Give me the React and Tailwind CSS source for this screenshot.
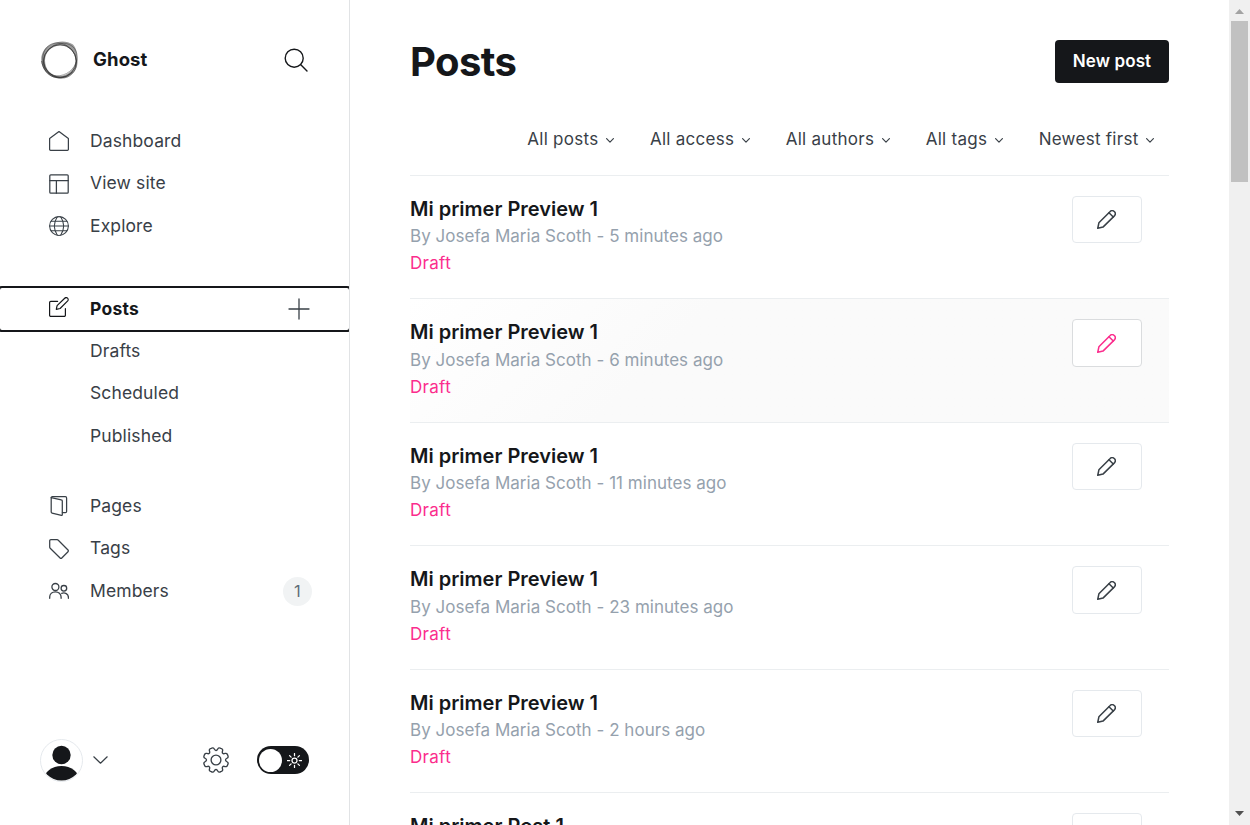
import React from 'react';

const stroke = { fill: 'none', stroke: 'currentColor', strokeLinecap: 'round', strokeLinejoin: 'round' };

const HomeIcon = () => (
  <svg className="size-5 shrink-0" viewBox="0 0 20 20" {...stroke} strokeWidth="1.25">
    <path d="M.6 7.6 10 .6l9.400 7V18.200a1.200 1.200 0 0 1-1.200 1.200H1.800A1.200 1.200 0 0 1 .6 18.200z" />
  </svg>
);

const SiteIcon = () => (
  <svg className="size-5 shrink-0" viewBox="0 0 20 20" {...stroke} strokeWidth="1.25">
    <rect x=".8" y=".8" width="18.400" height="18.400" rx="1" />
    <path d="M.8 6.500h18.400M7.400 6.500v12.700" />
  </svg>
);

const GlobeIcon = () => (
  <svg className="size-5 shrink-0" viewBox="0 0 20 20" {...stroke} strokeWidth="1.05">
    <circle cx="10" cy="10" r="9.400" />
    <path d="M.6 10h18.800M2 5.300h16M2 14.700h16M8.300.8C4.600 6.500 4.600 13.500 8.300 19.200M11.700.8c3.700 5.700 3.700 12.700 0 18.400" />
  </svg>
);

const PostsIcon = () => (
  <svg className="size-5 shrink-0" viewBox="0 0 20 20" {...stroke} strokeWidth="1.2">
    <path d="M16.400 11.700v6.500a1.200 1.200 0 0 1-1.200 1.200H1.800A1.200 1.200 0 0 1 .6 18.200V5.600a1.200 1.200 0 0 1 1.200-1.200H8.600" />
    <path d="m11.100 11.500-3.800.8.800-3.700L15.700 1.300a1.900 1.900 0 0 1 3 2.600z" />
  </svg>
);

const PagesIcon = () => (
  <svg className="size-5 shrink-0" viewBox="0 0 20 20" {...stroke} strokeWidth="1.250">
    <path d="M2.200 1.600 12.300 3.800a1.200 1.200 0 0 1 1 1.200v13.700c0 .5-.4.8-.9.7L3.100 17.200a1.200 1.200 0 0 1-.9-1.200z" />
    <path d="M2.200 1.600C2.200 1 2.700.7 3.200.7h13.200a1.200 1.200 0 0 1 1.200 1.200v13.500a1.200 1.200 0 0 1-1.200 1.200h-3" />
  </svg>
);

const TagIcon = () => (
  <svg className="size-5 shrink-0" viewBox="0 0 20 20" {...stroke} strokeWidth="1.25">
    <path d="M.7 1.900A1.200 1.200 0 0 1 1.900.7h6.200c.5 0 .9.2 1.200.5l9.700 9.800a1.200 1.200 0 0 1 0 1.700l-6.200 6.300a1.200 1.200 0 0 1-1.700 0L1.200 9.200A1.700 1.700 0 0 1 .7 8z" />
  </svg>
);

const MembersIcon = () => (
  <svg className="size-5 shrink-0" viewBox="0 0 20 20" {...stroke} strokeWidth="1.3">
    <circle cx="6.400" cy="6" r="3.500" />
    <circle cx="14.900" cy="7.300" r="2.800" />
    <path d="M.7 17.300v-1.200c0-3.100 2.500-5.200 5.700-5.200s5.700 2.100 5.700 5.200v1.200M12.700 12.300c3.300-1.200 6.700.8 6.700 3.900v1.100" />
  </svg>
);

const PencilIcon = () => (
  <svg className="mr-0.5 size-[19px]" viewBox="0 0 20 20" {...stroke} strokeWidth="1.600">
    <path d="M.8 19.200 2 13.500 13.600 1.800a3.150 3.150 0 0 1 4.700 4.400L6.300 18z" />
    <path d="m12.600 2.900 4.500 4.400" />
  </svg>
);

const Chevron = () => (
  <svg className="mt-px w-2 h-[5px] shrink-0" viewBox="0 0 8 5" {...stroke} strokeWidth="1.150">
    <path d="m.6.600 3.400 3.600L7.400.600" />
  </svg>
);

const Logo = () => (
  <svg className="size-10 shrink-0" viewBox="0 0 40 40">
    <path fill="#999" fillRule="evenodd" d="M12 4C18 .8 27 .5 33 4.500c3.500 4 4 8 4.300 13 1 6-.5 12-3.800 15-5 5-10 6.500-17 5.500C8 36.500 1.500 29.500 1.200 20 1 12 6 6 12 4zM20.500 5.500C12 5.500 5 12 5 20.500S11 36 19.500 36s16-7.500 16-15.500-6.500-15-15-15z" />
    <g fill="none" stroke="#222" strokeWidth=".9">
      <circle cx="20" cy="21" r="16.300" strokeOpacity=".7" />
      <ellipse cx="20.200" cy="19.500" rx="18" ry="15.200" transform="rotate(-38 20.200 19.500)" strokeOpacity=".4" />
      <ellipse cx="19.600" cy="20.500" rx="18.400" ry="16" transform="rotate(55 19.600 20.500)" strokeOpacity=".45" />
      <path d="M1.700 21c1 8 6.500 15 14 16.500 6 1 12-.5 17-5.500" strokeOpacity=".7" />
    </g>
  </svg>
);

const GearIcon = () => (
  <svg className="mb-px size-[26px] shrink-0" viewBox="-13 -13 26 26" {...stroke} strokeWidth="1.350">
    <circle r="4.900" />
    <path d={gearPath()} />
  </svg>
);

// Eight rounded teeth, each joined to the next by a shallow valley.
function gearPath() {
  const point = (radius, degrees) => {
    const a = (degrees * Math.PI) / 180;
    return `${(radius * Math.cos(a)).toFixed(2)} ${(radius * Math.sin(a)).toFixed(2)}`;
  };
  let d = `M${point(9.500, 0)}`;
  for (let i = 0; i < 8; i += 1) {
    const base = i * 45;
    d += `Q${point(9.500, base + 6)} ${point(11.100, base + 9)}`;
    d += `Q${point(13.200, base + 12)} ${point(12.600, base + 22.500)}`;
    d += `Q${point(13.200, base + 33)} ${point(11.100, base + 36)}`;
    d += `Q${point(9.500, base + 39)} ${point(9.500, base + 45)}`;
  }
  return `${d}Z`;
}

function NavItem({ icon, label, children }) {
  return (
    <a className="flex h-[42.5px] items-center pl-[49px] pr-[37px]">
      <span className="flex w-[41px]">{icon}</span>
      <span className="flex-1">{label}</span>
      {children}
    </a>
  );
}

function Sidebar() {
  return (
    <aside className="flex h-full w-[350px] shrink-0 flex-col overflow-hidden border-r border-[#e1e3e5] text-[17.5px] tracking-[0.12px] text-[#394047]">
      <header className="flex h-[119.85px] items-center pl-10 pr-[41px]">
        <Logo />
        <h2 className="ml-[13px] flex-1 text-[18.5px] font-bold text-[#15171a]">Ghost</h2>
        <svg className="size-6 text-[#15171a]" viewBox="0 0 24 24" {...stroke} strokeWidth="1.400">
          <circle cx="10.200" cy="10.200" r="9" />
          <path d="m16.800 16.800 6.200 6.200" />
        </svg>
      </header>
      <nav>
        <NavItem icon={<HomeIcon />} label="Dashboard" />
        <NavItem icon={<SiteIcon />} label="View site" />
        <NavItem icon={<GlobeIcon />} label="Explore" />
        <div className="mt-[40.65px]">
          <a className="flex h-[42px] items-center rounded-[2px] pl-[49px] pr-[39px] font-bold tracking-[0.25px] text-[#15171a] outline-2 outline-[#15171a]">
            <span className="flex w-[41px] pb-1"><PostsIcon /></span>
            <span className="flex-1 pt-px">Posts</span>
            <svg className="size-[22px] text-[#394047]" viewBox="0 0 22 22" {...stroke} strokeWidth="1.300">
              <path d="M11 1v20M1 11h20" />
            </svg>
          </a>
          <div className="-mt-[0.15px]">
            <NavItem label="Drafts" />
            <NavItem label="Scheduled" />
            <NavItem label="Published" />
          </div>
        </div>
        <div className="mt-[27.5px]">
          <NavItem icon={<PagesIcon />} label="Pages" />
          <NavItem icon={<TagIcon />} label="Tags" />
          <NavItem icon={<MembersIcon />} label="Members">
            <span className="flex size-[29px] items-center justify-center rounded-full bg-[#f1f3f4] text-[16.5px] font-normal text-[#626d79]">1</span>
          </NavItem>
        </div>
      </nav>
      <footer className="mt-auto flex h-[130px] items-center pt-px pl-10 pr-10">
        <svg className="size-[43px]" viewBox="0 0 43 43">
          <clipPath id="avatar"><circle cx="21.500" cy="21" r="20.500" /></clipPath>
          <circle cx="21.500" cy="21.500" r="21" fill="#fff" stroke="#e5e9ed" />
          <g fill="#15171a" clipPath="url(#avatar)">
            <circle cx="21.500" cy="16" r="9.200" />
            <ellipse cx="21.500" cy="40.500" rx="17.500" ry="13.500" />
          </g>
        </svg>
        <svg className="mb-px ml-2.5 h-2 w-[15px]" viewBox="0 0 15 8" {...stroke} strokeWidth="1.200">
          <path d="m.8.800 6.700 6.400L14.200.800" />
        </svg>
        <span className="flex-1" />
        <GearIcon />
        <span className="ml-7 mb-px flex h-7 w-[52px] items-center justify-between rounded-full bg-[#15171a] pl-0.5 pr-[7px]">
          <span className="size-[23px] rounded-full bg-white" />
          <svg className="size-[15px] text-white" viewBox="-7.500 -7.500 15 15" {...stroke} strokeWidth="1.250">
            <circle r="2.500" />
            <path d="M0-4.800V-7M0 4.800V7M-4.800 0H-7M4.800 0H7M3.400 3.400 4.900 4.900M-3.400 3.400-4.900 4.900M3.400-3.400 4.900-4.900M-3.400-3.400-4.900-4.900" />
          </svg>
        </span>
      </footer>
    </aside>
  );
}

const posts = [
  { title: 'Mi primer Preview 1', age: '5 minutes ago' },
  { title: 'Mi primer Preview 1', age: '6 minutes ago', hovered: true },
  { title: 'Mi primer Preview 1', age: '11 minutes ago' },
  { title: 'Mi primer Preview 1', age: '23 minutes ago' },
  { title: 'Mi primer Preview 1', age: '2 hours ago' },
  { title: 'Mi primer Post 1', age: '2 hours ago' },
];

function PostRow({ title, age, hovered }) {
  return (
    <li className={`flex h-[123.5px] justify-between border-t border-[#ebeef0] pr-[27px] pt-5 ${hovered ? 'bg-linear-135 from-white to-[#fafafa] to-35%' : ''}`}>
      <div>
        <h3 className="text-[20px] leading-[27.25px] font-semibold text-[#15171a]">{title}</h3>
        <p className="text-[17px] leading-[27px] tracking-[0.03px] text-[#95a1ad]">By Josefa Maria Scoth - {age}</p>
        <p className="text-[17px] leading-[27px] tracking-[0.3px] text-[#fb2d8d]">Draft</p>
      </div>
      <button className={`flex h-[47.5px] w-[70px] items-center justify-center rounded-[4px] border bg-white ${hovered ? 'border-[#dadcde] text-[#fb2d8d]' : 'border-[#e5e9ed] text-[#394047]'}`}>
        <PencilIcon />
      </button>
    </li>
  );
}

const filters = ['All posts', 'All access', 'All authors', 'All tags', 'Newest first'];

export default function App() {
  return (
    <div className="flex h-[825px] w-[1250px] overflow-hidden bg-white font-['Inter',sans-serif]">
      <Sidebar />
      <main className="h-full min-w-0 flex-1 overflow-hidden pl-[60px] pr-[60px]">
        <div className="flex items-start justify-between pt-10">
          <h1 className="text-[40px] leading-[44px] font-bold tracking-[-0.6px] text-[#15171a]">Posts</h1>
          <button className="h-[43px] w-[114px] rounded-[4px] bg-[#15171a] text-[17px] font-semibold tracking-[0.1px] text-white">New post</button>
        </div>
        <div className="mt-[42px] flex h-[27px] items-center justify-end gap-9 pr-[15px] text-[17px] tracking-[0.27px] text-[#394047]">
          {filters.map((label) => (
            <span key={label} className="flex items-center gap-[7.5px]">{label}<Chevron /></span>
          ))}
        </div>
        <ul className="mt-[21.75px]">
          {posts.map((post, i) => <PostRow key={i} {...post} />)}
        </ul>
      </main>
      <div className="flex h-full w-[21px] shrink-0 flex-col items-center bg-[#f0f0f0]">
        <svg className="h-[21px] w-[9px]" viewBox="0 0 9 21"><path d="M0 14h9L4.500 9z" fill="#a3a3a3" /></svg>
        <div className="h-[161px] w-[17px] bg-[#c1c1c1]" />
        <svg className="mt-auto h-[21px] w-[9px]" viewBox="0 0 9 21"><path d="M0 7h9L4.500 12z" fill="#505050" /></svg>
      </div>
    </div>
  );
}
